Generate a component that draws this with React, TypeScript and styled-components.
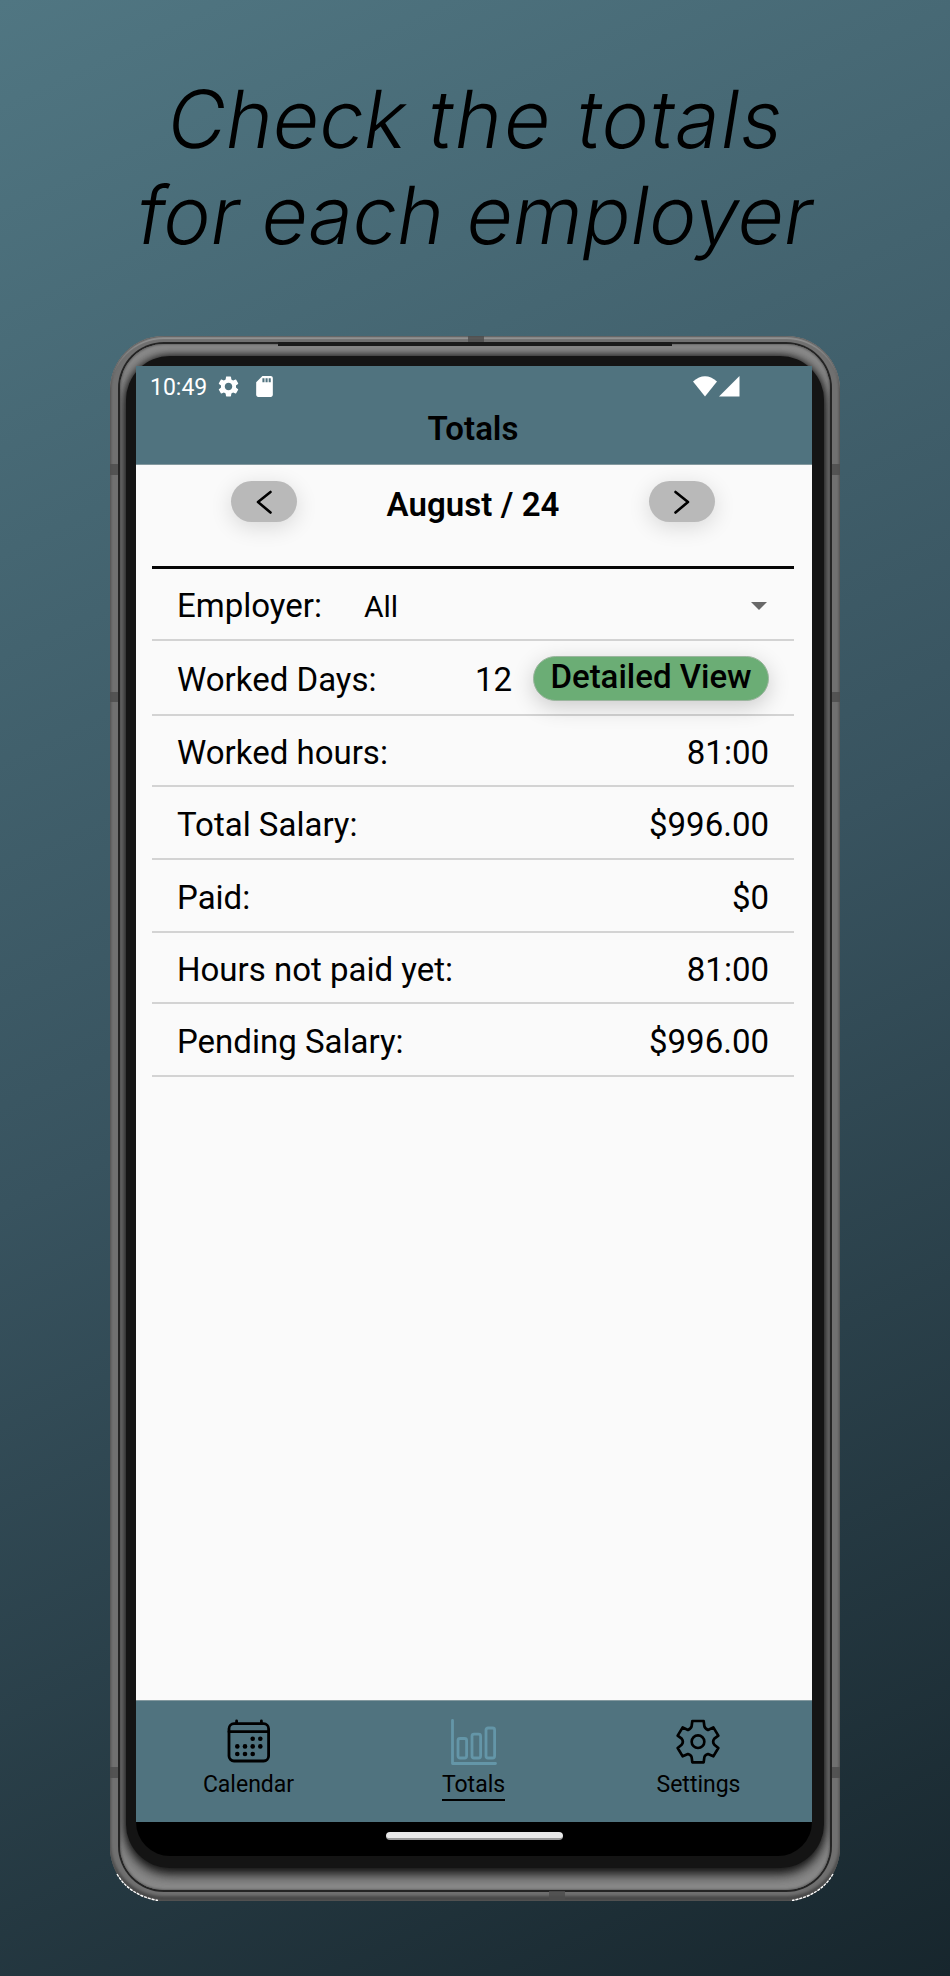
import React from "react";
import styled, { createGlobalStyle } from "styled-components";
import { MdSdCard, MdSettings } from "react-icons/md";

const GlobalStyle = createGlobalStyle`
  *, *::before, *::after { box-sizing: border-box; }
  body { margin: 0; }
`;

const Page = styled.main`
  width: 950px;
  height: 1976px;
  overflow: hidden;
  display: flex;
  flex-direction: column;
  align-items: center;
  background: linear-gradient(155deg, #507682 0%, #38535f 50%, #17262d 100%);
  font-family: Roboto, sans-serif;
  color: #000;
`;

const Headline = styled.h1`
  margin: 71px 0 0;
  height: 265px;
  font: 300 80px/96px Inter, sans-serif;
  text-align: center;
  white-space: nowrap;
`;

const Slanted = styled.span`
  display: block;
  padding-left: 2px;
  transform: skewX(-9.2deg);
`;

const Tracked = styled.span<{ $by: number }>`
  letter-spacing: ${(p) => p.$by}px;
`;

const Phone = styled.div`
  position: relative;
  width: 730px;
  height: 1565px;
  padding: 6px 8px 9px;
  border-radius: 54px;
  background: #707070;
  box-shadow: inset 0 0 2px 1px #555, inset 0 3px 1px #999, inset 0 -5px 3px #484848;
`;

const Rim = styled.div`
  height: 100%;
  padding: 2px;
  border-radius: 46px;
  background: #242424;
`;

const Bevel = styled.div`
  height: 100%;
  padding: 12px 6px 22px;
  border-radius: 44px;
  overflow: hidden;
  background: #8a8a8a;
  box-shadow: inset 0 0 2px 1px #666;
`;

const Bezel = styled.div`
  height: 100%;
  padding: 10px 10px 12px;
  border-radius: 44px;
  background: #141414;
  box-shadow: 0 -1px 8px -1px #141414, 0 4px 14px -2px #141414, 0 8px 14px -3px #303030;
`;

const Notch = styled.i<{ $x: number; $y: number; $w: number; $h: number }>`
  position: absolute;
  left: ${(p) => p.$x}px;
  top: ${(p) => p.$y}px;
  width: ${(p) => p.$w}px;
  height: ${(p) => p.$h}px;
  background: #4d4d4d;
  opacity: 0.85;
`;

const Speaker = styled.i`
  position: absolute;
  left: 168px;
  top: 6px;
  width: 394px;
  height: 4px;
  background: #1b1b1b;
`;

const EdgeGlints = styled.svg`
  position: absolute;
  left: 0;
  bottom: 0;
`;

const Screen = styled.div`
  width: 676px;
  height: 1490px;
  display: flex;
  flex-direction: column;
  background: #000;
  border-radius: 0 0 34px 34px;
`;

const AppBar = styled.header`
  flex: none;
  height: 99px;
  background: #50737f;
  border-bottom: 1px solid #84999f;
`;

const StatusBar = styled.div`
  height: 40px;
  padding: 0 72px 0 14px;
  display: flex;
  align-items: center;
  color: #fff;
`;

const Clock = styled.span`
  padding-top: 3px;
  font-size: 23px;
  line-height: 37px;
  width: 66px;
`;

const StatusIcon = styled.span<{ $gap?: number }>`
  display: flex;
  margin-left: ${(p) => p.$gap ?? 0}px;
`;

const Signals = styled.div`
  display: flex;
  gap: 2px;
  margin-left: auto;
`;

const ScreenTitle = styled.h2`
  margin: 3px 2px 0 0;
  text-align: center;
  font-size: 33px;
  line-height: 40px;
  font-weight: 600;
`;

const Content = styled.section`
  flex: none;
  height: 1235px;
  padding: 0 18px 0 16px;
  background: #fafafa;
`;

const MonthPicker = styled.div`
  height: 104px;
  padding: 16px 79px 0;
  display: flex;
  justify-content: space-between;
  align-items: flex-start;
  border-bottom: 3px solid #060606;
`;

const MonthButton = styled.button`
  width: 66px;
  height: 41px;
  padding: 0;
  display: flex;
  align-items: center;
  justify-content: center;
  border: 0;
  border-radius: 21px;
  background: #b9b9b9;
  box-shadow: 0 5px 22px rgba(0, 0, 0, 0.14);
`;

const Month = styled.h3`
  margin: 4px 0 0;
  font-size: 33px;
  line-height: 40px;
  font-weight: 600;
  letter-spacing: 0.08px;
`;

const Row = styled.div<{ $h: number }>`
  height: ${(p) => p.$h}px;
  padding: 4px 25px 0 25px;
  display: flex;
  align-items: center;
  border-bottom: 2px solid #d3d3d3;
  font-size: 33px;
  line-height: 40px;
`;

const Value = styled.span`
  margin-left: auto;
`;

const Select = styled.span`
  flex: 1;
  margin-left: 42px;
  padding-top: 2px;
  display: flex;
  align-items: center;
  justify-content: space-between;
  font-size: 30px;
  svg { margin-top: -2px; }
`;

const DetailButton = styled.button`
  width: 236px;
  height: 45px;
  margin: -3px 0 0 21px;
  padding: 0 0 2px;
  border: 1px solid #9bb59e;
  border-radius: 23px;
  background: #6bad75;
  box-shadow: 0 6px 22px rgba(0, 0, 0, 0.19);
  font: 500 33px/40px Roboto, sans-serif;
  color: #000;
  white-space: nowrap;
`;

const TabBar = styled.nav`
  flex: none;
  height: 122px;
  display: grid;
  grid-template-columns: repeat(3, 225px);
  justify-items: center;
  background: #50737f;
  border-top: 1px solid #84999f;
`;

const Tab = styled.div`
  display: flex;
  flex-direction: column;
  align-items: center;
  padding-top: 18px;
  svg { display: block; }
`;

const TabLabel = styled.span<{ $active?: boolean }>`
  margin-top: 6px;
  height: 30px;
  font-size: 23px;
  line-height: 28px;
  border-bottom: 2px solid ${(p) => (p.$active ? "#000" : "transparent")};
`;

const HomeBar = styled.div`
  width: 177px;
  height: 8px;
  margin: 10px 0 0 250px;
  border-radius: 4px;
  background: #e8e8e8;
  border-bottom: 2px solid #999;
`;

const Chevron = ({ right }: { right?: boolean }) => (
  <svg width="18" height="26" viewBox="0 0 18 26" fill="none" stroke="#000" strokeWidth="2.6" strokeLinecap="round" strokeLinejoin="round">
    <path d={right ? "M2.500 3 15 13 2.500 23.500" : "M15.500 3 3 13l12.500 10.500"} />
  </svg>
);

const CalendarIcon = () => {
  const dots = [[25.7, 19.7], [33.3, 19.7], [10.3, 27.4], [18, 27.4], [25.7, 27.4], [33.3, 27.4], [10.3, 35], [18, 35], [25.7, 35]];
  return (
    <svg width="44" height="46" viewBox="0 0 44 46">
      <g fill="none" stroke="#000" strokeWidth="2.8" strokeLinecap="round">
        <rect x="2" y="4.700" width="39.600" height="37.300" rx="5" />
        <path d="M2 12.700h39.600M9.600 2v2.500M34.400 2v2.500" />
      </g>
      {dots.map(([x, y]) => <circle key={`${x}-${y}`} cx={x} cy={y} r="2.3" />)}
    </svg>
  );
};

const ChartIcon = () => (
  <svg width="46" height="46" viewBox="-1 0 46 46" overflow="visible" fill="none" stroke="#6496a8" strokeWidth="2.8" strokeLinecap="round" strokeLinejoin="round">
    <path d="M1.500 1.500V44.500H44.500" />
    <rect x="7" y="19.500" width="8.600" height="19.500" rx="2" />
    <rect x="21" y="15.200" width="8.600" height="23.800" rx="2" />
    <rect x="35" y="9" width="8.600" height="30" rx="2" />
  </svg>
);

const GearIcon = () => (
  <svg width="44" height="46" viewBox="-66 -68 132 138" fill="none" stroke="#000" strokeWidth="8" strokeLinejoin="round">
    <path d="M-17-62H17L19-47Q20-40 30-35L46-43 61-18 49-9Q42 0 49 9L61 19 46 44 30 37Q20 40 19 47L17 62H-17L-19 47Q-20 40-30 37L-46 44-61 19-49 9Q-42 0-49-9L-61-18-46-43-30-35Q-20-40-19-47Z" />
    <circle r="19" />
  </svg>
);

const totals = [
  { label: "Worked hours:", value: "81:00", h: 71 },
  { label: "Total Salary:", value: "$996.00", h: 73 },
  { label: "Paid:", value: "$0", h: 73 },
  { label: "Hours not paid yet:", value: "81:00", h: 71 },
  { label: "Pending Salary:", value: "$996.00", h: 73 },
];

const notches = [
  [0, 128, 8, 11], [722, 128, 8, 11], [0, 356, 8, 10], [722, 356, 8, 10],
  [0, 1431, 8, 11], [722, 1431, 8, 11], [358, 0, 16, 6], [439, 1555, 16, 9],
];

export default function App() {
  return (
    <Page>
      <GlobalStyle />
      <Headline>
        <Slanted>Check <Tracked $by={2.2}>the </Tracked><Tracked $by={1.1}>totals</Tracked></Slanted>
        <Slanted><Tracked $by={-0.12}>for each employer</Tracked></Slanted>
      </Headline>
      <Phone>
        <Rim>
          <Bevel>
            <Bezel>
              <Screen>
                <AppBar>
                  <StatusBar>
                    <Clock>10:49</Clock>
                    <StatusIcon><MdSettings size={25} /></StatusIcon>
                    <StatusIcon $gap={11}><MdSdCard size={25} /></StatusIcon>
                    <Signals>
                      <svg width="24" height="21" viewBox="0 0 24 21"><path d="M0 5.500Q12-5 24 5.500L12 20.500Z" fill="#fff" /></svg>
                      <svg width="21" height="21" viewBox="0 0 21 21"><path d="M0 20.500H20.500V0Z" fill="#fff" /></svg>
                    </Signals>
                  </StatusBar>
                  <ScreenTitle>Totals</ScreenTitle>
                </AppBar>
                <Content>
                  <MonthPicker>
                    <MonthButton aria-label="Previous month"><Chevron /></MonthButton>
                    <Month>August / 24</Month>
                    <MonthButton aria-label="Next month"><Chevron right /></MonthButton>
                  </MonthPicker>
                  <Row $h={72}>
                    <span>Employer:</span>
                    <Select>
                      All
                      <svg width="20" height="8" viewBox="0 0 20 8"><path d="M2 0h16l-8 8z" fill="#686868" /></svg>
                    </Select>
                  </Row>
                  <Row $h={75}>
                    <span>Worked Days:</span>
                    <Value>12</Value>
                    <DetailButton>Detailed View</DetailButton>
                  </Row>
                  {totals.map((t) => (
                    <Row key={t.label} $h={t.h}>
                      <span>{t.label}</span>
                      <Value>{t.value}</Value>
                    </Row>
                  ))}
                </Content>
                <TabBar>
                  <Tab><CalendarIcon /><TabLabel>Calendar</TabLabel></Tab>
                  <Tab><ChartIcon /><TabLabel $active>Totals</TabLabel></Tab>
                  <Tab><GearIcon /><TabLabel>Settings</TabLabel></Tab>
                </TabBar>
                <HomeBar />
              </Screen>
            </Bezel>
          </Bevel>
        </Rim>
        <Speaker />
        {notches.map(([x, y, w, h]) => <Notch key={`${x}-${y}`} $x={x} $y={y} $w={w} $h={h} />)}
        <EdgeGlints width="730" height="40" viewBox="0 0 730 40" fill="none" stroke="#fff" strokeWidth="1.4" strokeDasharray="3 1">
          <path d="M7 13Q19 34 48 39.500" />
          <path d="M723 13Q711 34 682 39.500" />
        </EdgeGlints>
      </Phone>
    </Page>
  );
}
